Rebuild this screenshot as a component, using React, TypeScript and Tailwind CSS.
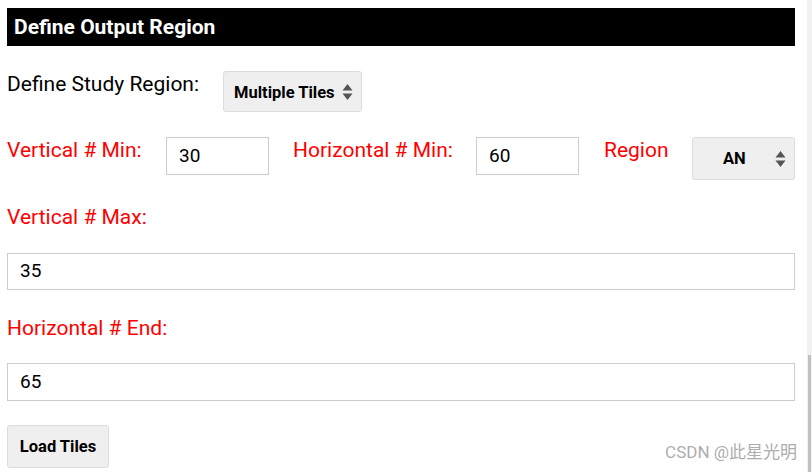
import React from 'react';

const Arrows = () => (
    <svg width="11" height="18" viewBox="0 0 11 18" className="shrink-0">
        <path d="M5.5 1 L10.5 7.5 L0.5 7.5 Z" fill="#555" />
        <path d="M5.5 17 L10.5 10.5 L0.5 10.5 Z" fill="#555" />
    </svg>
);

const Label = ({ children, className = '' }: { children: React.ReactNode; className?: string }) => (
    <div className={`text-[21px] leading-[24px] text-[#ff0000] whitespace-nowrap ${className}`}>{children}</div>
);

const TextBox = ({ value, className = '' }: { value: string; className?: string }) => (
    <div className={`border border-[#cccccc] bg-white flex items-center pl-[12px] text-[19px] text-black ${className}`}>
        {value}
    </div>
);

export default function App() {
    return (
        <div className="w-[812px] h-[472px] bg-white flex overflow-hidden" style={{ fontFamily: 'Roboto, "Noto Sans CJK SC", sans-serif' }}>
            <div className="flex-1 pl-[7px] pr-[12px] pt-[8px] relative">
                {/* Header */}
                <div className="bg-black h-[38px] flex items-center pl-[7px] pt-[2px] text-white font-bold text-[21px]">
                    Define Output Region
                </div>

                {/* Study region */}
                <div className="flex items-start mt-[25px]">
                    <div className="text-[21px] leading-[24px] text-black mt-[1px] w-[216px]">Define Study Region:</div>
                    <div className="h-[41px] w-[139px] bg-[#efefef] border border-[#dcdcdc] rounded-[3px] flex items-center justify-between pl-[10px] pr-[8px] font-bold text-[16.5px] text-black">
                        <span className="pt-[3px]">Multiple Tiles</span>
                        <Arrows />
                    </div>
                </div>

                {/* Min row */}
                <div className="flex items-start mt-[25px]">
                    <Label className="mt-[1px] w-[159px]">Vertical # Min:</Label>
                    <TextBox value="30" className="w-[103px] h-[38px]" />
                    <Label className="mt-[1px] ml-[24px] w-[183px]">Horizontal # Min:</Label>
                    <TextBox value="60" className="w-[103px] h-[38px]" />
                    <Label className="mt-[1px] ml-[25px] w-[88px]">Region</Label>
                    <div className="h-[43px] w-[103px] bg-[#efefef] border border-[#dcdcdc] rounded-[3px] flex items-center pl-[30px] pr-[8px] font-bold text-[16.5px] text-black">
                        <span className="flex-1 pt-[2px]">AN</span>
                        <Arrows />
                    </div>
                </div>

                <Label className="mt-[25px]">Vertical # Max:</Label>
                <TextBox value="35" className="mt-[24px] h-[37px]" />

                <Label className="mt-[26px]">Horizontal # End:</Label>
                <TextBox value="65" className="mt-[23px] h-[38px]" />

                <div className="mt-[24px] h-[43px] w-[102px] bg-[#efefef] border border-[#dcdcdc] rounded-[3px] flex items-center justify-center pt-[2px] font-bold text-[16.5px] text-black">
                    Load Tiles
                </div>

                {/* watermark */}
                <div className="absolute right-[10px] bottom-[7px] text-[17px] text-[#adadad]">
                    CSDN @此星光明
                </div>
            </div>

            {/* scrollbar */}
            <div className="w-[5px] bg-[#f1f1f1] flex flex-col">
                <div className="h-[355px]" />
                <div className="flex-1 ml-[1px] w-[3px] bg-[#c1c1c1]" />
            </div>
        </div>
    );
}
